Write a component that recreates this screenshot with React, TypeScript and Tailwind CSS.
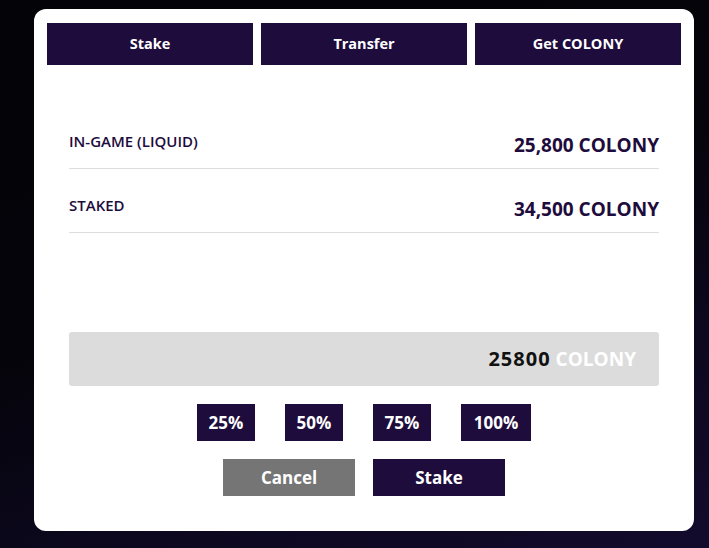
import React from "react";

const font = { fontFamily: "'Open Sans', 'Noto Sans', sans-serif" };

export default function App() {
  const tabs = ["Stake", "Transfer", "Get COLONY"];
  const pcts = ["25%", "50%", "75%", "100%"];
  return (
    <div
      className="w-[709px] h-[548px] overflow-hidden bg-[linear-gradient(160deg,#040307_0%,#05040a_45%,#0d0820_75%,#130b2c_100%)] pt-[9px] pl-[34px]"
      style={font}
    >
      <div className="w-[660px] h-[522px] bg-white rounded-[12px] pt-[14px] px-[13px] flex flex-col">
        <div className="flex gap-[8px]">
          {tabs.map((t) => (
            <div
              key={t}
              className="flex-1 h-[42px] bg-[#1e0c3c] text-white text-[14.5px] font-bold flex items-center justify-center"
            >
              {t}
            </div>
          ))}
        </div>
        <div className="px-[22px] mt-[40px]">
          {[
            ["IN-GAME (LIQUID)", "25,800 COLONY"],
            ["STAKED", "34,500 COLONY"],
          ].map(([l, v]) => (
            <div
              key={l}
              className="h-[64px] flex justify-between items-end border-b border-[#dddddd]"
            >
              <span className="text-[15px] font-semibold text-[#1e0c3c] pb-[18px] leading-[17px]">
                {l}
              </span>
              <span className="text-[19px] font-bold text-[#1e0c3c] pb-[11px] leading-[23px]">
                {v}
              </span>
            </div>
          ))}
          <div className="mt-[99px] h-[54px] bg-[#dcdcdc] rounded-[3px] flex items-center justify-end pr-[23px] font-bold">
            <span className="text-[#111111] text-[20px] tracking-[1px]">25800</span>
            <span className="text-white ml-[5px] text-[19px]">COLONY</span>
          </div>
          <div className="mt-[18px] flex justify-center gap-[30px]">
            {pcts.map((p) => (
              <div
                key={p}
                className={`${p === "100%" ? "w-[70px]" : "w-[58px]"} h-[37px] bg-[#1e0c3c] text-white text-[17px] font-bold flex items-center justify-center`}
              >
                {p}
              </div>
            ))}
          </div>
          <div className="mt-[18px] flex justify-center gap-[18px]">
            <div className="w-[132px] h-[37px] bg-[#757575] text-white text-[17px] font-bold flex items-center justify-center">
              Cancel
            </div>
            <div className="w-[132px] h-[37px] bg-[#1e0c3c] text-white text-[17px] font-bold flex items-center justify-center">
              Stake
            </div>
          </div>
        </div>
      </div>
    </div>
  );
}
